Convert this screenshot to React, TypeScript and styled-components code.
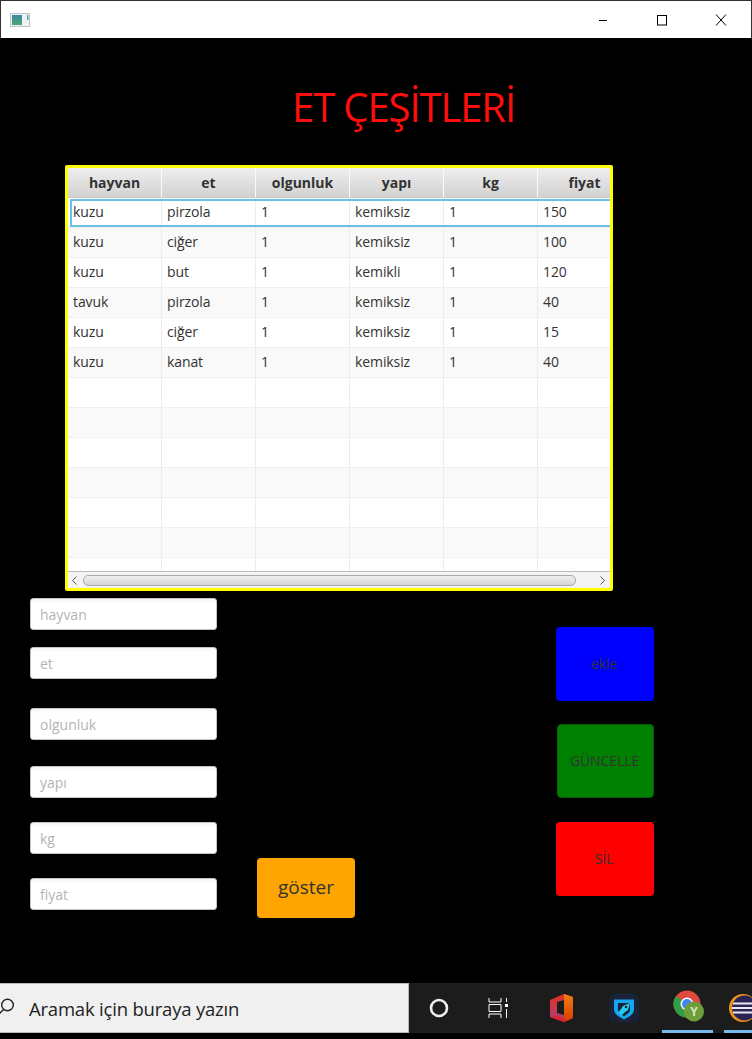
import React from 'react';
import styled, { createGlobalStyle } from 'styled-components';

type MeatRow = {
    animal: string;
    cut: string;
    age: string;
    kind: string;
    weight: string;
    price: string;
};

const rows: MeatRow[] = [
    { animal: 'kuzu', cut: 'pirzola', age: '1', kind: 'kemiksiz', weight: '1', price: '150' },
    { animal: 'kuzu', cut: 'ciğer', age: '1', kind: 'kemiksiz', weight: '1', price: '100' },
    { animal: 'kuzu', cut: 'but', age: '1', kind: 'kemikli', weight: '1', price: '120' },
    { animal: 'tavuk', cut: 'pirzola', age: '1', kind: 'kemiksiz', weight: '1', price: '40' },
    { animal: 'kuzu', cut: 'ciğer', age: '1', kind: 'kemiksiz', weight: '1', price: '15' },
    { animal: 'kuzu', cut: 'kanat', age: '1', kind: 'kemiksiz', weight: '1', price: '40' },
];

const emptyRows = 7;
const columns = ['hayvan', 'et', 'olgunluk', 'yapı', 'kg', 'fiyat'];

const fields = [
    { name: 'hayvan', top: 0 },
    { name: 'et', top: 17 },
    { name: 'olgunluk', top: 29 },
    { name: 'yapı', top: 26 },
    { name: 'kg', top: 24 },
    { name: 'fiyat', top: 24 },
];

const GlobalStyle = createGlobalStyle`
    html, body {
        margin: 0;
        padding: 0;
        background: #000;
    }
    body {
        font-family: 'Open Sans', 'Noto Sans', sans-serif;
    }
`;

const Screen = styled.div`
    width: 752px;
    height: 1039px;
    display: flex;
    flex-direction: column;
    overflow: hidden;
    background: #000;
`;

const TitleBar = styled.div`
    height: 37px;
    flex: none;
    display: flex;
    align-items: center;
    justify-content: space-between;
    background: #fff;
    border-top: 1px solid #333;
    border-left: 1px solid #333;
    border-right: 1px solid #333;
`;

const AppIcon = styled.svg`
    margin-left: 9px;
    width: 20px;
    height: 16px;
`;

const WindowButtons = styled.div`
    display: flex;
    margin-right: 1px;
`;

const WindowButton = styled.div`
    width: 59px;
    height: 36px;
    display: flex;
    align-items: center;
    justify-content: center;
`;

const Body = styled.main`
    flex: 1;
    display: flex;
    flex-direction: column;
    min-height: 0;
`;

const Heading = styled.h1`
    margin: 42px 0 0 292px;
    height: 54px;
    color: #ff0d0d;
    font-size: 40px;
    font-weight: 400;
    line-height: 54px;
    letter-spacing: -1.1px;
    white-space: nowrap;
`;

const TableFrame = styled.div`
    margin: 31px 0 0 65px;
    width: 542px;
    height: 420px;
    border: 3px solid #ffff00;
    border-radius: 2px;
    background: #fff;
    display: flex;
    flex-direction: column;
    overflow: hidden;
`;

const GridRow = styled.div`
    display: grid;
    grid-template-columns: repeat(6, 94px);
    flex: none;
`;

const HeaderCell = styled.div`
    height: 30px;
    box-sizing: border-box;
    display: flex;
    align-items: center;
    justify-content: center;
    font-size: 14px;
    font-weight: 700;
    color: #333;
    background: linear-gradient(#eeeeee, #d2d2d2);
    border-right: 1px solid #fafafa;
    border-bottom: 1px solid #c8c8c8;
`;

const Rows = styled.div`
    flex: 1;
    min-height: 0;
    overflow: hidden;
`;

const BodyRow = styled(GridRow)<{ $odd: boolean; $selected?: boolean }>`
    position: relative;
    height: 30px;
    background: ${({ $odd }) => ($odd ? '#f9f9f9' : '#fff')};
    ${({ $selected }) =>
        $selected
            ? `&::after {
                content: '';
                position: absolute;
                top: 1px;
                bottom: 1px;
                left: 2px;
                right: -6px;
                border: 2px solid #6ebfe2;
                border-right: none;
                pointer-events: none;
            }`
            : ''}
`;

const Cell = styled.div`
    box-sizing: border-box;
    height: 30px;
    padding: 0 0 2px 5px;
    display: flex;
    align-items: center;
    font-size: 14px;
    letter-spacing: -0.1px;
    color: #333;
    border-right: 1px solid #ececec;
    border-bottom: 1px solid #f0f0e8;
`;

const ScrollBar = styled.div`
    height: 17px;
    flex: none;
    box-sizing: border-box;
    display: flex;
    align-items: center;
    background: #f4f4f4;
    border-top: 1px solid #bbb;
    padding: 0 4px 0 3px;
`;

const ScrollThumb = styled.div`
    flex: 1;
    height: 11px;
    margin: 0 23px 0 5px;
    box-sizing: border-box;
    border: 1px solid #aaa;
    border-radius: 5px;
    background: linear-gradient(#efefef, #d6d6d6);
`;

const Arrow = styled.svg`
    width: 7px;
    height: 9px;
    flex: none;
`;

const Controls = styled.section`
    margin: 7px 0 0 30px;
    display: flex;
    align-items: flex-start;
`;

const FieldColumn = styled.div`
    width: 187px;
    display: flex;
    flex-direction: column;
`;

const Field = styled.input<{ $top: number }>`
    box-sizing: border-box;
    width: 187px;
    height: 32px;
    margin-top: ${({ $top }) => $top}px;
    padding: 0 9px;
    border: 1px solid #c4c4c4;
    border-radius: 3px;
    background: linear-gradient(#f6f6f6, #fff 5px);
    font-family: inherit;
    font-size: 14px;
    outline: none;
    &::placeholder {
        color: #b4b4b4;
        opacity: 1;
    }
`;

const ShowButton = styled.button`
    width: 98px;
    height: 60px;
    margin: 260px 0 0 40px;
    padding: 0 0 3px;
    border: none;
    border-radius: 4px;
    background: #ffa500;
    color: #333;
    font-family: inherit;
    font-size: 19px;
`;

const ActionColumn = styled.div`
    width: 99px;
    margin: 29px 0 0 201px;
    display: flex;
    flex-direction: column;
`;

const ActionButton = styled.button<{ $color: string; $top: number; $inset?: boolean }>`
    width: ${({ $inset }) => ($inset ? '97px' : '98px')};
    margin-left: ${({ $inset }) => ($inset ? '1px' : '0')};
    margin-top: ${({ $top }) => $top}px;
    height: 74px;
    padding: 0 2px 2px 0;
    border: ${({ $inset }) => ($inset ? '1px solid #0a5a0a' : 'none')};
    border-radius: 4px;
    background: ${({ $color }) => $color};
    color: #333;
    font-family: inherit;
    font-size: 14px;
    letter-spacing: -0.1px;
`;

const Spacer = styled.div`
    flex: 1;
`;

const Taskbar = styled.footer`
    height: 50px;
    flex: none;
    margin-bottom: 6px;
    display: flex;
    align-items: center;
    background: #1c1c1c;
`;

const SearchBox = styled.div`
    width: 409px;
    height: 50px;
    flex: none;
    box-sizing: border-box;
    display: flex;
    align-items: center;
    gap: 14px;
    background: #f0f0f0;
    border: 1px solid #b8b8b8;
    border-left: none;
    color: #222;
    font-size: 18.5px;
    letter-spacing: -0.2px;
`;

const SearchIcon = styled.svg`
    width: 15px;
    height: 17px;
    flex: none;
    margin-bottom: 3px;
`;

const TrayItem = styled.div<{ $width: number; $gap?: number; $active?: boolean }>`
    width: ${({ $width }) => $width}px;
    margin-left: ${({ $gap }) => $gap ?? 0}px;
    height: 50px;
    flex: none;
    display: flex;
    align-items: center;
    justify-content: center;
    box-sizing: border-box;
    ${({ $active }) => ($active ? 'border-bottom: 3px solid #76b9ed; padding-top: 3px;' : '')}
`;

const ChromeIcon = styled.svg`
    margin-left: 6px;
    flex: none;
`;

const EclipseIcon = styled.svg`
    margin-left: 10px;
    flex: none;
`;

const App: React.FC = () => {
    return (
        <Screen>
            <GlobalStyle />
            <TitleBar>
                <AppIcon viewBox="0 0 20 16">
                    <defs>
                        <linearGradient id="appIconFill" x1="0" y1="0" x2="0" y2="1">
                            <stop offset="0" stopColor="#3f86a6" />
                            <stop offset="1" stopColor="#4fa86c" />
                        </linearGradient>
                    </defs>
                    <rect x="0.5" y="1.5" width="19" height="13" fill="#eef2f3" stroke="#c4c4c4" />
                    <rect x="2" y="3" width="10" height="10" fill="url(#appIconFill)" />
                    <rect x="17" y="3" width="1.5" height="5" fill="#5b9fc0" />
                </AppIcon>
                <WindowButtons>
                    <WindowButton>
                        <svg width="10" height="10" viewBox="0 0 10 10">
                            <path d="M1 5.5h8" stroke="#000" fill="none" />
                        </svg>
                    </WindowButton>
                    <WindowButton>
                        <svg width="12" height="12" viewBox="0 0 12 12">
                            <rect x="1.5" y="1.5" width="9" height="9.5" stroke="#000" fill="none" />
                        </svg>
                    </WindowButton>
                    <WindowButton>
                        <svg width="12" height="12" viewBox="0 0 12 12">
                            <path d="M1 0.5l10 11M11 0.5l-10 11" stroke="#000" fill="none" />
                        </svg>
                    </WindowButton>
                </WindowButtons>
            </TitleBar>
            <Body>
                <Heading>ET ÇEŞİTLERİ</Heading>
                <TableFrame>
                    <GridRow>
                        {columns.map((column) => (
                            <HeaderCell key={column}>{column}</HeaderCell>
                        ))}
                    </GridRow>
                    <Rows>
                        {rows.map((row, index) => (
                            <BodyRow key={`${row.animal}-${index}`} $odd={index % 2 === 1} $selected={index === 0}>
                                <Cell>{row.animal}</Cell>
                                <Cell>{row.cut}</Cell>
                                <Cell>{row.age}</Cell>
                                <Cell>{row.kind}</Cell>
                                <Cell>{row.weight}</Cell>
                                <Cell>{row.price}</Cell>
                            </BodyRow>
                        ))}
                        {Array.from({ length: emptyRows }).map((_, index) => (
                            <BodyRow key={index} $odd={(index + rows.length) % 2 === 1}>
                                {columns.map((column) => (
                                    <Cell key={column} />
                                ))}
                            </BodyRow>
                        ))}
                    </Rows>
                    <ScrollBar>
                        <Arrow viewBox="0 0 7 9">
                            <path d="M5.5 0.5L1.5 4.5l4 4" stroke="#555" fill="none" />
                        </Arrow>
                        <ScrollThumb />
                        <Arrow viewBox="0 0 7 9">
                            <path d="M1.5 0.5l4 4-4 4" stroke="#555" fill="none" />
                        </Arrow>
                    </ScrollBar>
                </TableFrame>
                <Controls>
                    <FieldColumn>
                        {fields.map((field) => (
                            <Field key={field.name} placeholder={field.name} $top={field.top} readOnly />
                        ))}
                    </FieldColumn>
                    <ShowButton>göster</ShowButton>
                    <ActionColumn>
                        <ActionButton $color="#0000ff" $top={0}>ekle</ActionButton>
                        <ActionButton $color="#008000" $top={23} $inset>GÜNCELLE</ActionButton>
                        <ActionButton $color="#ff0000" $top={24}>SİL</ActionButton>
                    </ActionColumn>
                </Controls>
                <Spacer />
            </Body>
            <Taskbar>
                <SearchBox>
                    <SearchIcon viewBox="0 0 15 17">
                        <circle cx="7.5" cy="7" r="5.8" stroke="#222" strokeWidth="1.4" fill="none" />
                        <path d="M3.5 11.5L-1 16" stroke="#222" strokeWidth="1.4" />
                    </SearchIcon>
                    Aramak için buraya yazın
                </SearchBox>
                <TrayItem $width={60}>
                    <svg width="20" height="20" viewBox="0 0 20 20">
                        <circle cx="10" cy="10" r="8" stroke="#eee" strokeWidth="2.6" fill="none" />
                    </svg>
                </TrayItem>
                <TrayItem $width={60}>
                    <svg width="22" height="20" viewBox="0 0 22 20">
                        <path d="M1 0v4h12V0M1 6.5h12v7H1zM1 20v-4h12v4" stroke="#fff" fill="none" />
                        <rect x="17" y="6" width="3" height="3" fill="#fff" />
                        <path d="M18.5 0v4M18.5 11v9" stroke="#fff" fill="none" />
                    </svg>
                </TrayItem>
                <TrayItem $width={65}>
                    <svg width="24" height="28" viewBox="0 0 24 28">
                        <defs>
                            <linearGradient id="officeLeft" x1="0" y1="0" x2="0" y2="1">
                                <stop offset="0" stopColor="#e0301e" />
                                <stop offset="0.6" stopColor="#c23a5a" />
                                <stop offset="1" stopColor="#a83a70" />
                            </linearGradient>
                            <linearGradient id="officeRight" x1="0" y1="0" x2="0" y2="1">
                                <stop offset="0" stopColor="#f08010" />
                                <stop offset="1" stopColor="#d83b01" />
                            </linearGradient>
                        </defs>
                        <path d="M0 6L14 0l9 3v21l-9 4-14-5z" fill="url(#officeLeft)" />
                        <path d="M14 0l9 3v21l-9 4z" fill="url(#officeRight)" />
                        <path d="M7 8l7-2v15l-7-2z" fill="#1c1c1c" />
                        <path d="M0 23l14 5 3-2-10-4z" fill="#e0202c" />
                    </svg>
                </TrayItem>
                <TrayItem $width={60}>
                    <svg width="30" height="30" viewBox="0 0 30 30">
                        <rect width="30" height="30" rx="7" fill="#1a2238" />
                        <path d="M5 6.5h20v10c0 4.500-5 7.500-10 10C10 24 5 21 5 16.500z" fill="#15a6f0" />
                        <path d="M9 10h12v6.500c0 3-3 5-6 6.500-3-1.500-6-3.500-6-6.500z" fill="#1a2238" />
                        <path d="M8 21l4-5 2-3 7-3-2 7-3 2-4 4-1-3z" fill="#1fd0f4" />
                        <circle cx="17" cy="14" r="1.300" fill="#1a2238" />
                    </svg>
                </TrayItem>
                <TrayItem $width={51} $gap={8} $active>
                    <ChromeIcon width="36" height="36" viewBox="0 0 36 36">
                        <circle cx="14" cy="14" r="13.500" fill="#dd4b3e" />
                        <path d="M14 14L2.300 20.750A13.500 13.500 0 0 1 3 6z" fill="#2f9e44" />
                        <path d="M14 14L2.300 20.750A13.500 13.500 0 0 0 14 27.500h4z" fill="#2f9e44" />
                        <path d="M14 14h13.500a13.500 13.500 0 0 1-9 12.700z" fill="#fbc02d" />
                        <circle cx="14" cy="14" r="6.500" fill="#fff" />
                        <circle cx="14" cy="14" r="5" fill="#4285f4" />
                        <circle cx="21" cy="21.500" r="10" fill="#6e9e3a" />
                        <text x="21" y="26" textAnchor="middle" fontSize="12" fontWeight="700" fill="#d8e8c4" fontFamily="Open Sans">Y</text>
                    </ChromeIcon>
                </TrayItem>
                <TrayItem $width={28} $gap={11} $active>
                    <EclipseIcon width="28" height="30" viewBox="0 0 28 30">
                        <circle cx="14" cy="15" r="14" fill="#e8941f" />
                        <circle cx="15.500" cy="15" r="12.500" fill="#2c2255" />
                        <path d="M4 10.500h24M3 15h25M4 19.500h24" stroke="#e8e8f0" strokeWidth="1.800" />
                    </EclipseIcon>
                </TrayItem>
            </Taskbar>
        </Screen>
    );
};

export default App;
